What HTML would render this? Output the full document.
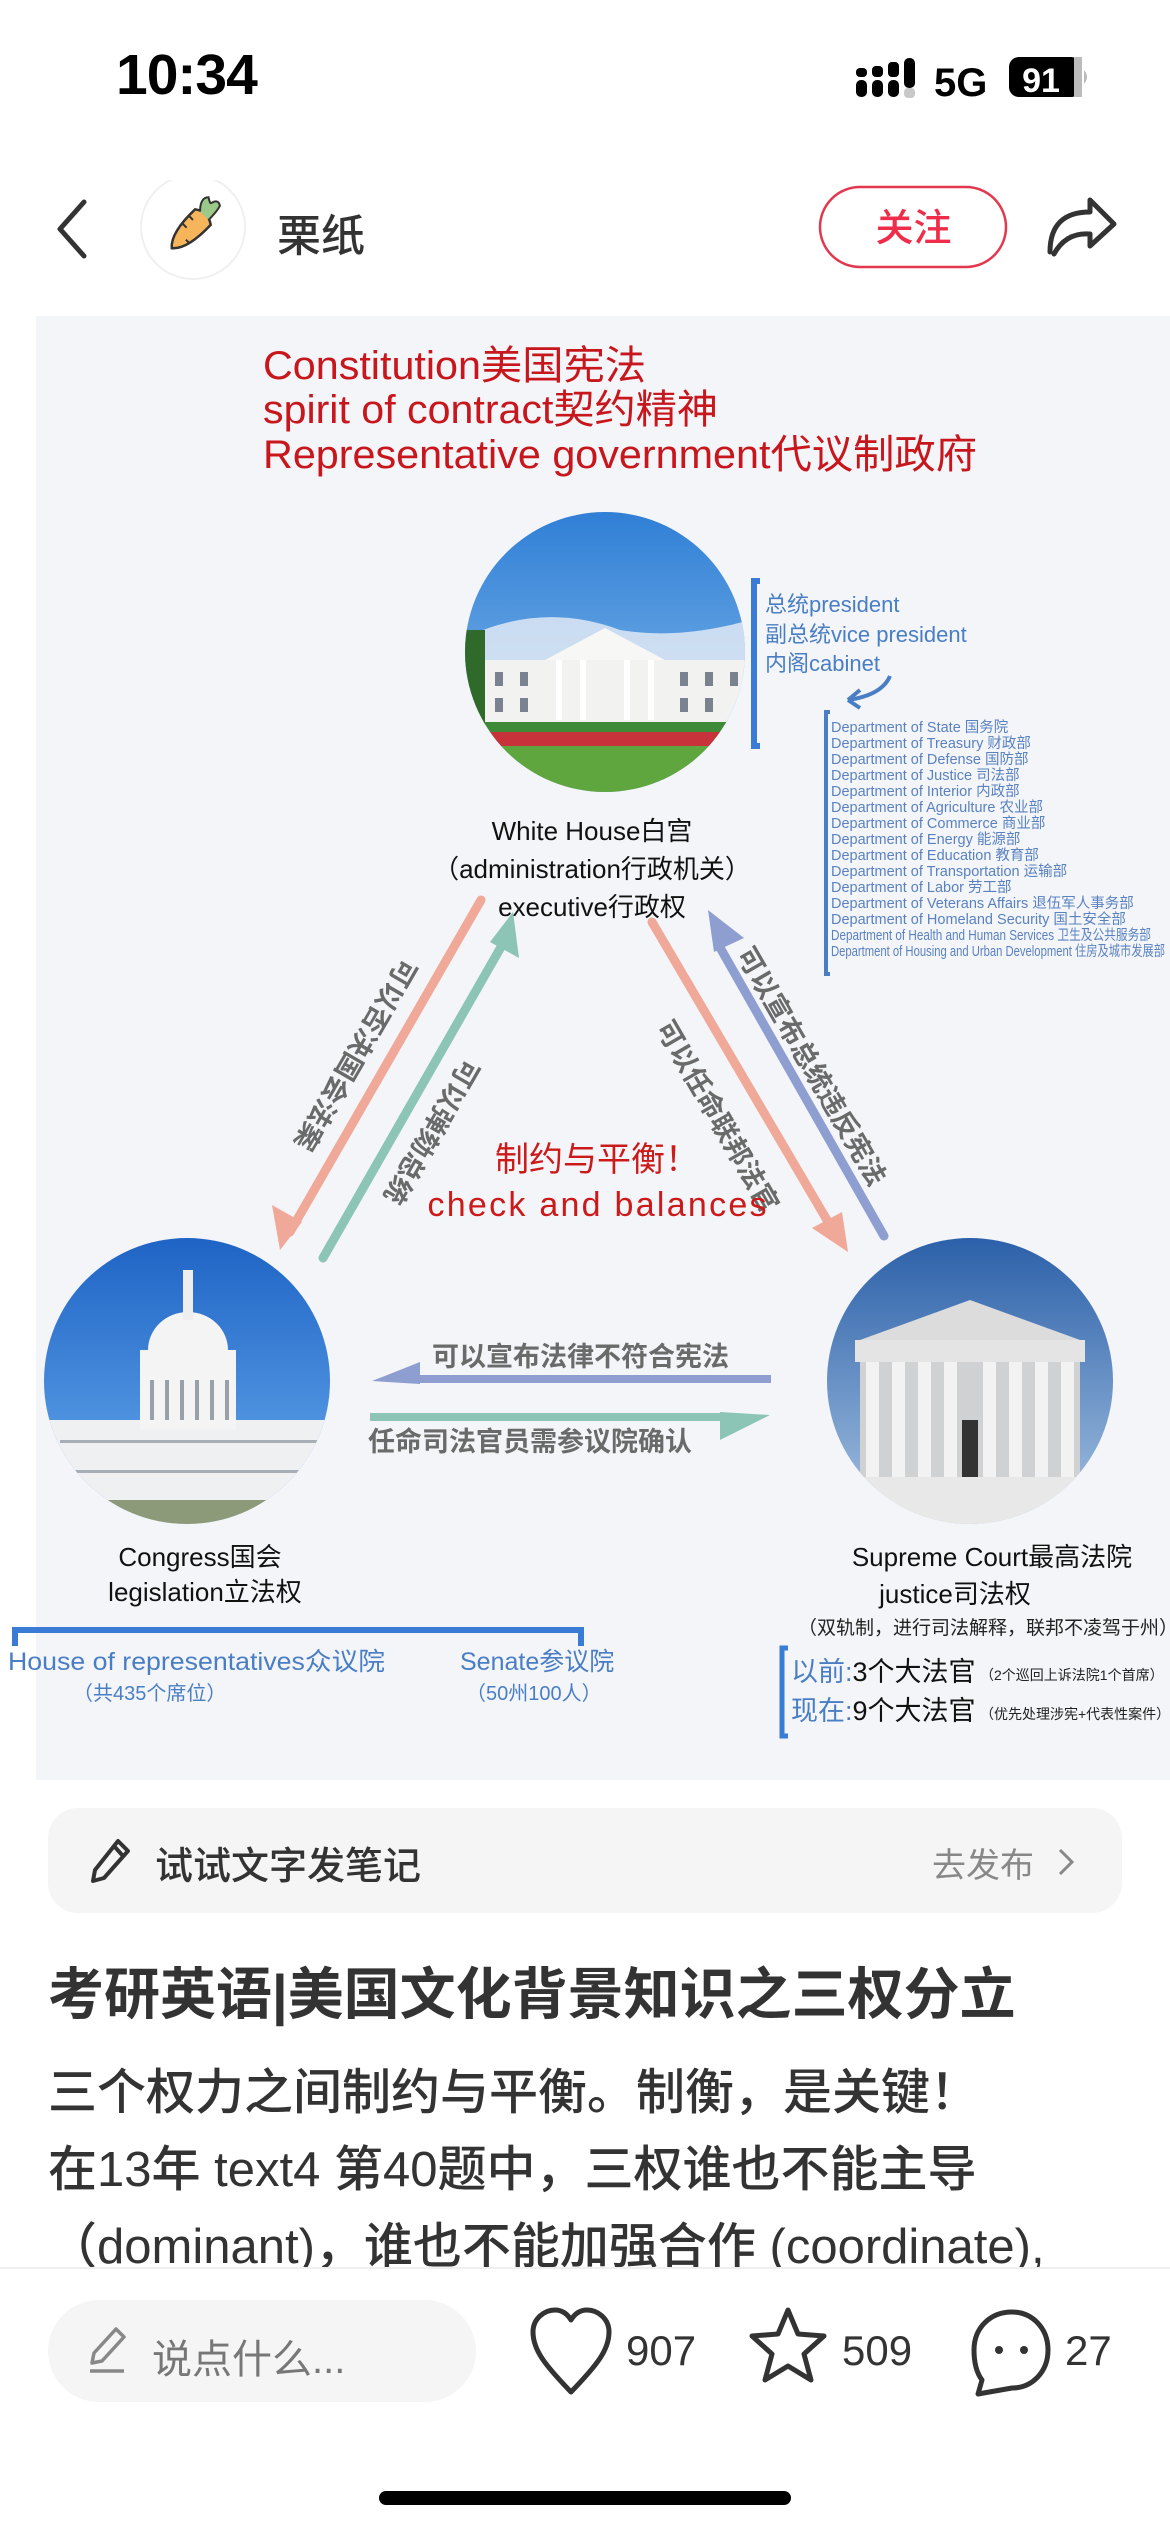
<!DOCTYPE html>
<html><head><meta charset="utf-8">
<style>
*{margin:0;padding:0;box-sizing:border-box}
body{width:1170px;height:2532px;position:relative;background:#fff;overflow:hidden;font-family:"Liberation Sans","Noto Sans CJK SC",sans-serif;color:#333}
.a{position:absolute;white-space:nowrap}
</style></head><body>

<!-- status bar -->
<div class="a" style="left:116px;top:42px;font-size:57px;font-weight:700;color:#000;letter-spacing:-1px">10:34</div>
<svg class="a" style="left:850px;top:52px" width="250" height="52" viewBox="850 52 250 52">
  <g fill="#000">
    <rect x="856" y="80" width="11" height="17" rx="5"/><rect x="856" y="68" width="11" height="9" rx="4"/>
    <rect x="872" y="80" width="11" height="17" rx="5"/><rect x="872" y="66" width="11" height="11" rx="4"/>
    <rect x="888" y="80" width="11" height="17" rx="5"/><rect x="888" y="62" width="11" height="15" rx="4"/>
    <rect x="904" y="58" width="11" height="30" rx="5"/>
  </g>
  <rect x="904" y="88" width="11" height="10" rx="4" fill="#c8c8c8"/>
  <text x="934" y="96" font-size="40" font-weight="700" fill="#000" font-family="Liberation Sans">5G</text>
  <rect x="1009" y="57" width="72" height="40" rx="10" fill="#000"/>
  <rect x="1074" y="57" width="8" height="40" fill="#bbb"/>
  <path d="M1084 70 q6 7 0 14z" fill="#bbb"/>
  <text x="1041" y="92" font-size="34" font-weight="700" fill="#fff" text-anchor="middle" font-family="Liberation Sans">91</text>
</svg>

<!-- nav -->
<svg class="a" style="left:0;top:180px" width="1170" height="100" viewBox="0 180 1170 100">
  <path d="M84 202 L60 229 L84 256" fill="none" stroke="#333" stroke-width="5" stroke-linecap="round" stroke-linejoin="round"/>
  <circle cx="193" cy="227" r="52" fill="#fff" stroke="#f0f0f0" stroke-width="2"/>
  <g transform="translate(193,227) rotate(-45)">
    <path d="M-30 0 Q-20 -12 14 -11 Q22 0 14 11 Q-20 12 -30 0z" fill="#f6b55b" stroke="#333" stroke-width="2.5"/>
    <path d="M-5 -10 l0 6 M5 -10 l0 5 M-14 4 l0 5" stroke="#333" stroke-width="2"/>
    <path d="M16 -6 q10 -10 16 -4 q-4 6 -2 6 q8 2 4 8 q-6 2 -18 2" fill="#9bc98a" stroke="#333" stroke-width="2"/>
  </g>
  <path d="M940 187 h26 a40 40 0 0 1 0 80 h-106 a40 40 0 0 1 0 -80z" fill="none" stroke="#e2384e" stroke-width="2.5"/>
  <path d="M1050 252 Q1050 212 1090 212 L1090 200 L1114 224 L1090 246 L1090 234 Q1066 232 1054 254" fill="none" stroke="#333" stroke-width="5" stroke-linejoin="round" stroke-linecap="round"/>
</svg>
<div class="a" style="left:277px;top:200px;font-size:44px;color:#333;font-weight:500">栗纸</div>
<div class="a" style="left:820px;top:197px;width:187px;text-align:center;font-size:38px;color:#ef2d4a;font-weight:500">关注</div>

<!-- image -->
<svg class="a" style="left:0;top:316px" width="1170" height="1464" viewBox="0 316 1170 1464" font-family="Liberation Sans, Noto Sans CJK SC, sans-serif">
  <defs>
    <linearGradient id="sky" x1="0" y1="0" x2="0" y2="1"><stop offset="0" stop-color="#2f7fd6"/><stop offset="1" stop-color="#8fc0ec"/></linearGradient>
    <linearGradient id="sky2" x1="0" y1="0" x2="0" y2="1"><stop offset="0" stop-color="#1e63c4"/><stop offset="1" stop-color="#6aaef0"/></linearGradient>
    <linearGradient id="sky3" x1="0" y1="0" x2="0" y2="1"><stop offset="0" stop-color="#2a5fa8"/><stop offset="1" stop-color="#aac6e4"/></linearGradient>
    <clipPath id="c1"><circle cx="605" cy="652" r="140"/></clipPath>
    <clipPath id="c2"><circle cx="187" cy="1381" r="143"/></clipPath>
    <clipPath id="c3"><circle cx="970" cy="1381" r="143"/></clipPath>
  </defs>
  <rect x="36" y="316" width="1134" height="1464" fill="#f3f5f9"/>
  <g fill="#c8161d" font-size="40">
    <text x="263" y="379" textLength="383" lengthAdjust="spacingAndGlyphs">Constitution美国宪法</text>
    <text x="263" y="423" textLength="455" lengthAdjust="spacingAndGlyphs">spirit of contract契约精神</text>
    <text x="263" y="468" textLength="714" lengthAdjust="spacingAndGlyphs">Representative  government代议制政府</text>
  </g>
  <!-- white house -->
  <g clip-path="url(#c1)">
    <rect x="460" y="510" width="290" height="290" fill="url(#sky)"/>
    <path d="M460 640 Q540 600 620 630 Q680 640 750 620 L750 660 L460 660z" fill="#e8eef6" opacity=".8"/>
    <rect x="470" y="720" width="280" height="60" fill="#3f8a36"/>
    <rect x="470" y="732" width="280" height="14" fill="#c8323a"/>
    <rect x="470" y="746" width="280" height="50" fill="#5fa63f"/>
    <rect x="470" y="660" width="280" height="62" fill="#f2f2f0"/>
    <path d="M545 660 L605 628 L665 660z" fill="#f7f7f5"/>
    <rect x="463" y="630" width="22" height="100" fill="#2f6a2a"/>
    <g fill="#7a8290"><rect x="495" y="672" width="8" height="14"/><rect x="520" y="672" width="8" height="14"/><rect x="680" y="672" width="8" height="14"/><rect x="705" y="672" width="8" height="14"/><rect x="730" y="672" width="8" height="14"/><rect x="495" y="698" width="8" height="14"/><rect x="520" y="698" width="8" height="14"/><rect x="680" y="698" width="8" height="14"/><rect x="705" y="698" width="8" height="14"/></g>
    <g fill="#fff"><rect x="556" y="660" width="6" height="60"/><rect x="580" y="660" width="6" height="60"/><rect x="624" y="660" width="6" height="60"/><rect x="648" y="660" width="6" height="60"/></g>
  </g>
  <path d="M760 581 h-6 v165 h6" fill="none" stroke="#3a7bd5" stroke-width="6"/>
  <g fill="#4a7ec4" font-size="22">
    <text x="765" y="612">总统president</text>
    <text x="765" y="642">副总统vice president</text>
    <text x="765" y="671">内阁cabinet</text>
  </g>
  <path d="M890 676 Q882 695 848 700 M848 700 l12 -10 M848 700 l12 8" fill="none" stroke="#4a7ec4" stroke-width="4"/>
  <path d="M830 712 h-4 v262 h4" fill="none" stroke="#4a7ec4" stroke-width="4"/>
  <g fill="#5a82c0" font-size="14.5">
    <text x="831" y="732">Department of State 国务院</text>
    <text x="831" y="748">Department of Treasury 财政部</text>
    <text x="831" y="764">Department of Defense 国防部</text>
    <text x="831" y="780">Department of Justice 司法部</text>
    <text x="831" y="796">Department of Interior 内政部</text>
    <text x="831" y="812">Department of Agriculture 农业部</text>
    <text x="831" y="828">Department of Commerce 商业部</text>
    <text x="831" y="844">Department of Energy 能源部</text>
    <text x="831" y="860">Department of Education 教育部</text>
    <text x="831" y="876">Department of Transportation 运输部</text>
    <text x="831" y="892">Department of Labor 劳工部</text>
    <text x="831" y="908">Department of Veterans Affairs 退伍军人事务部</text>
    <text x="831" y="924">Department of Homeland Security 国土安全部</text>
    <text x="831" y="940" textLength="320" lengthAdjust="spacingAndGlyphs">Department of Health and Human Services 卫生及公共服务部</text>
    <text x="831" y="956" textLength="334" lengthAdjust="spacingAndGlyphs">Department of Housing and Urban Development 住房及城市发展部</text>
  </g>
  <g fill="#111" font-size="26" text-anchor="middle">
    <text x="592" y="840">White House白宫</text>
    <text x="592" y="878">（administration行政机关）</text>
    <text x="592" y="916">executive行政权</text>
  </g>
  <!-- diagonal arrows -->
  <g stroke-width="9" fill="none" stroke-linecap="round">
    <path d="M481 900 L290 1232" stroke="#f0a898"/>
    <path d="M323 1258 L505 940" stroke="#8cc4b6"/>
    <path d="M652 922 L834 1232" stroke="#f0a898"/>
    <path d="M884 1236 L718 944" stroke="#8e9ed0"/>
  </g>
  <path d="M280 1250 L272 1205 L302 1222z" fill="#f0a898"/>
  <path d="M513 912 L519 958 L490 942z" fill="#8cc4b6"/>
  <path d="M848 1252 L812 1228 L842 1212z" fill="#f0a898"/>
  <path d="M708 910 L744 938 L714 952z" fill="#8e9ed0"/>
  <g fill="#6a6a6a" font-size="27" font-weight="700" text-anchor="middle">
    <text transform="translate(356,1055) rotate(120)" dy="10">可以否决国会法案</text>
    <text transform="translate(432,1132) rotate(120)" dy="10">可以弹劾总统</text>
    <text transform="translate(718,1116) rotate(60)" dy="10">可以任命联邦法官</text>
    <text transform="translate(812,1066) rotate(60)" dy="10">可以宣布总统违反宪法</text>
  </g>
  <g fill="#cc1a1a" font-size="34" text-anchor="middle">
    <text x="597" y="1171">制约与平衡！</text>
    <text x="597" y="1216" textLength="339" lengthAdjust="spacing">check and balances</text>
  </g>
  <!-- congress -->
  <g clip-path="url(#c2)">
    <rect x="40" y="1235" width="300" height="300" fill="url(#sky2)"/>
    <rect x="40" y="1420" width="300" height="110" fill="#eef0f2"/>
    <rect x="140" y="1350" width="96" height="80" fill="#f4f4f4"/>
    <ellipse cx="188" cy="1350" rx="40" ry="38" fill="#f4f4f4"/>
    <rect x="183" y="1270" width="10" height="50" fill="#eee"/>
    <g fill="#9aa0a8"><rect x="150" y="1380" width="4" height="40"/><rect x="165" y="1380" width="4" height="40"/><rect x="180" y="1380" width="4" height="40"/><rect x="195" y="1380" width="4" height="40"/><rect x="210" y="1380" width="4" height="40"/><rect x="225" y="1380" width="4" height="40"/></g>
    <g fill="#a8aeb6"><rect x="60" y="1440" width="260" height="3"/><rect x="60" y="1470" width="260" height="3"/></g>
    <rect x="40" y="1500" width="300" height="40" fill="#8c9a7a"/>
  </g>
  <!-- supreme court -->
  <g clip-path="url(#c3)">
    <rect x="825" y="1235" width="300" height="300" fill="url(#sky3)"/>
    <path d="M860 1340 L970 1300 L1080 1340z" fill="#dcdcdc"/>
    <rect x="855" y="1340" width="230" height="22" fill="#e4e4e4"/>
    <rect x="860" y="1362" width="220" height="120" fill="#cfd1d3"/>
    <g fill="#f2f2f2"><rect x="866" y="1362" width="13" height="115"/><rect x="892" y="1362" width="13" height="115"/><rect x="918" y="1362" width="13" height="115"/><rect x="944" y="1362" width="13" height="115"/><rect x="983" y="1362" width="13" height="115"/><rect x="1009" y="1362" width="13" height="115"/><rect x="1035" y="1362" width="13" height="115"/><rect x="1061" y="1362" width="13" height="115"/></g>
    <rect x="962" y="1420" width="16" height="57" fill="#333"/>
    <rect x="825" y="1477" width="300" height="70" fill="#e8e8e8"/>
  </g>
  <!-- horizontal arrows -->
  <path d="M771 1379 L420 1379" stroke="#8e9ed0" stroke-width="8"/>
  <path d="M372 1381 L420 1362 L420 1384z" fill="#8e9ed0"/>
  <path d="M370 1417 L720 1417" stroke="#8cc4b6" stroke-width="8"/>
  <path d="M770 1415 L720 1412 L720 1440z" fill="#8cc4b6"/>
  <g fill="#6a6a6a" font-size="27" font-weight="700">
    <text x="432" y="1366">可以宣布法律不符合宪法</text>
    <text x="368" y="1451">任命司法官员需参议院确认</text>
  </g>
  <g fill="#111" font-size="26" text-anchor="middle">
    <text x="200" y="1566">Congress国会</text>
    <text x="205" y="1601">legislation立法权</text>
    <text x="992" y="1566">Supreme Court最高法院</text>
    <text x="955" y="1603">justice司法权</text>
  </g>
  <text x="988" y="1634" fill="#222" font-size="19" text-anchor="middle">（双轨制，进行司法解释，联邦不凌驾于州）</text>
  <path d="M15 1646 V1630 H581 V1646" fill="none" stroke="#3a7bd5" stroke-width="6"/>
  <g fill="#4a7ec4">
    <text x="8" y="1670" font-size="25" textLength="377" lengthAdjust="spacingAndGlyphs">House of  representatives众议院</text>
    <text x="73" y="1700" font-size="20">（共435个席位）</text>
    <text x="460" y="1670" font-size="25">Senate参议院</text>
    <text x="466" y="1700" font-size="20">（50州100人）</text>
  </g>
  <path d="M788 1648 h-6 v88 h6" fill="none" stroke="#3a7bd5" stroke-width="5"/>
  <g font-size="27">
    <text x="791" y="1681"><tspan fill="#4a7ec4">以前:</tspan><tspan fill="#111">3个大法官</tspan></text>
    <text x="791" y="1720"><tspan fill="#4a7ec4">现在:</tspan><tspan fill="#111">9个大法官</tspan></text>
  </g>
  <g fill="#222" font-size="14">
    <text x="980" y="1680">（2个巡回上诉法院1个首席）</text>
    <text x="980" y="1719">（优先处理涉宪+代表性案件）</text>
  </g>
</svg>

<!-- draft bar -->
<div class="a" style="left:48px;top:1808px;width:1074px;height:105px;border-radius:30px;background:#f5f5f5"></div>
<svg class="a" style="left:88px;top:1836px" width="46" height="50" viewBox="0 0 46 50">
  <path d="M30 5 L40 15 L16 42 L5 45 L7 34z M26 10 L35 20" fill="none" stroke="#333" stroke-width="4" stroke-linejoin="round"/>
</svg>
<div class="a" style="left:155px;top:1835px;font-size:38px;color:#333;font-weight:500">试试文字发笔记</div>
<div class="a" style="left:932px;top:1838px;font-size:34px;color:#888">去发布</div>
<svg class="a" style="left:1054px;top:1846px" width="24" height="32"><path d="M6 4 L18 16 L6 28" fill="none" stroke="#888" stroke-width="3"/></svg>

<!-- title & body -->
<div class="a" style="left:48px;top:1950px;font-size:56px;font-weight:700;color:#333">考研英语|美国文化背景知识之三权分立</div>
<div class="a" style="left:48px;top:2055px;font-size:49px;color:#333;line-height:77px;font-weight:500">三个权力之间制约与平衡。制衡，是关键！<br>在13年 text4 第40题中，三权谁也不能主导<br>（dominant)，谁也不能加强合作 (coordinate),</div>
<div class="a" style="left:0;top:2267px;width:1170px;height:265px;background:#fff"></div>
<div class="a" style="left:0;top:2267px;width:1170px;height:2px;background:#efefef"></div>

<!-- bottom bar -->
<div class="a" style="left:48px;top:2300px;width:428px;height:102px;border-radius:51px;background:#f5f5f5"></div>
<svg class="a" style="left:86px;top:2325px" width="44" height="50" viewBox="0 0 44 50">
  <path d="M30 4 L38 12 L16 36 L6 38 L8 28z" fill="none" stroke="#888" stroke-width="3.5" stroke-linejoin="round"/>
  <path d="M4 46 H38" stroke="#888" stroke-width="3.5"/>
</svg>
<div class="a" style="left:152px;top:2327px;font-size:40px;color:#777">说点什么...</div>
<svg class="a" style="left:0;top:2300px" width="1170" height="110" viewBox="0 2300 1170 110">
  <path d="M571 2392 C545 2365 533 2350 533 2332 C533 2318 545 2310 555 2310 C563 2310 568 2315 571 2320 C574 2315 579 2310 587 2310 C597 2310 609 2318 609 2332 C609 2350 597 2365 571 2392z" fill="none" stroke="#333" stroke-width="5" stroke-linejoin="round"/>
  <path d="M788 2310 L798 2334 L824 2336 L804 2354 L811 2380 L788 2366 L765 2380 L772 2354 L752 2336 L778 2334z" fill="none" stroke="#333" stroke-width="5" stroke-linejoin="round"/>
  <path d="M1012 2312 C1032 2312 1048 2328 1048 2350 C1048 2372 1032 2388 1012 2388 L978 2394 L982 2380 C976 2372 974 2362 974 2350 C974 2328 990 2312 1012 2312z" fill="none" stroke="#333" stroke-width="5" stroke-linejoin="round"/>
  <circle cx="999" cy="2350" r="4" fill="#333"/><circle cx="1024" cy="2350" r="4" fill="#333"/>
</svg>
<div class="a" style="left:626px;top:2327px;font-size:42px;color:#333;font-weight:500">907</div>
<div class="a" style="left:842px;top:2327px;font-size:42px;color:#333;font-weight:500">509</div>
<div class="a" style="left:1065px;top:2327px;font-size:42px;color:#333;font-weight:500">27</div>

<div class="a" style="left:379px;top:2491px;width:412px;height:14px;border-radius:7px;background:#000"></div>
</body></html>
